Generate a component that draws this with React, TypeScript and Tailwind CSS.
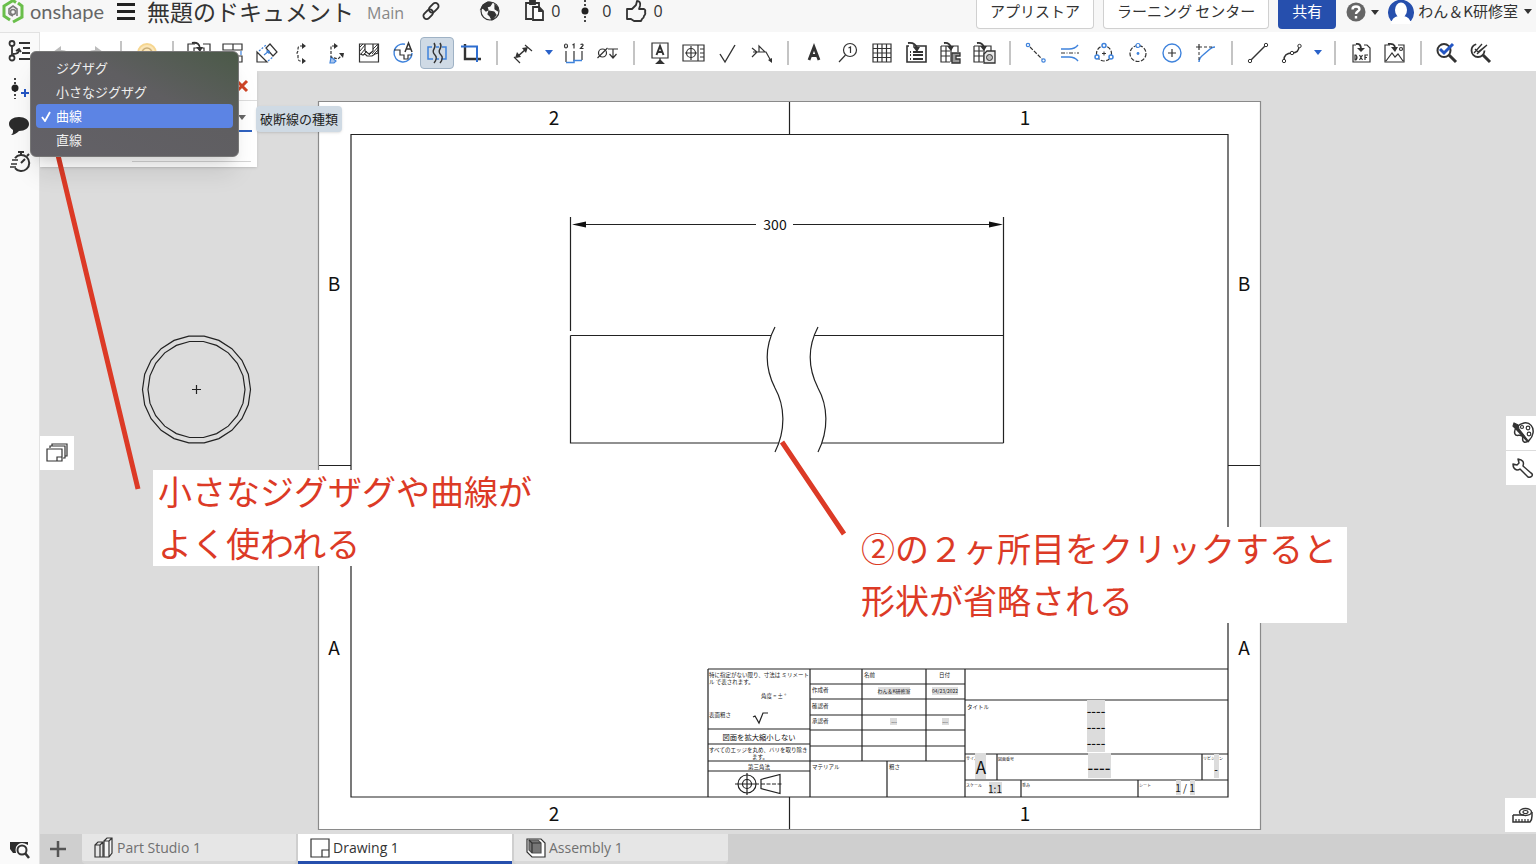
import type { ReactNode } from "react";

const Icon = ({ children, size = 24 }: { children: ReactNode; size?: number }) => (
  <svg
    width={size}
    height={size}
    viewBox="0 0 24 24"
    fill="none"
    stroke="#333"
    strokeWidth="1.2"
    aria-hidden="true"
    className="shrink-0"
  >
    {children}
  </svg>
);

const BLUE = "#3f83dc";

const Caret = ({ color = "#333" }: { color?: string }) => (
  <svg width="8" height="5" viewBox="0 0 8 5" aria-hidden="true">
    <path d="M0 0h8L4 5z" fill={color} />
  </svg>
);

type Tool = { label: string; icon: ReactNode; active?: boolean; caret?: boolean };

const toolGroups: Tool[][] = [
  [
    { label: "元に戻す", icon: <path d="M4 11l8-6v4c6 0 9 3 9 9-2-3-5-4-9-4v3z" fill="#bbb" stroke="none" /> },
    { label: "やり直し", icon: <path d="M20 11l-8-6v4c-6 0-9 3-9 9 2-3 5-4 9-4v3z" fill="#bbb" stroke="none" /> },
  ],
  [
    {
      label: "更新",
      icon: (
        <>
          <circle cx="12" cy="12" r="9" fill="#fbe6b8" stroke="#f6d690" strokeWidth="2" />
          <circle cx="12" cy="12" r="5" stroke="#c9ad77" strokeWidth="1.5" />
        </>
      ),
    },
  ],
  [
    {
      label: "ビューを挿入",
      icon: (
        <>
          <path d="M8 3H1v18h22V3h-7M7 12V7h10v8" />
          <path d="M5 2c5-1 8 1 8 6" strokeWidth="1.8" />
          <path d="M9 6h7l-3 5z" fill="#333" stroke="none" />
        </>
      ),
    },
    {
      label: "投影ビュー",
      icon: (
        <>
          <path d="M2 3h19v6H2zM12 3v6M2 14h7v7H2z" />
          <path d="M14 15h7v6h-7z" />
          <path d="M20 10v4" stroke={BLUE} />
        </>
      ),
    },
    {
      label: "補助ビュー",
      icon: (
        <>
          <path d="M2 11v10h10zM11 7l4-4 7 8-4 4z" />
          <path d="M4 10l7-6M13 20l5-4" stroke={BLUE} strokeDasharray="2 1.5" />
          <path d="M9 14l5-4M11 10h3v3" stroke={BLUE} />
        </>
      ),
    },
    {
      label: "断面ビュー",
      icon: (
        <>
          <path d="M14 5h-3q-2 0-2 3v2l-1 2 1 2v2q0 4 2 4h3" strokeDasharray="3 1.5" />
          <path d="M13 2l4 3-4 3zM13 17l4 3-4 3z" fill="#333" stroke="none" />
        </>
      ),
    },
    {
      label: "整列断面ビュー",
      icon: (
        <>
          <path d="M8 16l5 4-2 2H7z" fill="#a8c4ec" stroke={BLUE} />
          <path d="M12 5H8v11l7 2 4-4" strokeDasharray="3 1.5" />
          <path d="M11 2l4 3-4 3zM16 12h5l-1 5z" fill="#333" stroke="none" />
        </>
      ),
    },
    {
      label: "部分断面ビュー",
      icon: (
        <>
          <path d="M2.500 3h19v18h-19z" />
          <path d="M3 13l3 1 2-1 2 2h5l3-2 3-1V3M8 3v7l4 3 4-3V3" />
          <path d="M3 6l3-3M3 10l5-6M4 13l4-5M7 13l3-3M15 13l6-7M17 13l4-4M16 8l5-5M12 14l3-3" strokeWidth="1" />
        </>
      ),
    },
    {
      label: "詳細ビュー",
      icon: (
        <>
          <path d="M14 3.200A9 9 0 1 0 21 12" stroke={BLUE} strokeWidth="1.400" />
          <path d="M3 9h6v5h4v4h4v-4h4" />
          <path d="M14 11l3.500-9 3.500 9M15.500 8h4" strokeWidth="1.500" />
        </>
      ),
    },
    {
      label: "破断ビュー",
      active: true,
      icon: (
        <>
          <path d="M7 6H3v12h5M17 6h4v12h-5M11 18h3M11 6h3" stroke={BLUE} strokeWidth="1.500" />
          <path d="M9 2q2 3 0 6t1 6-1 8M15 2q2 3 0 6t1 6-1 8" strokeWidth="1.400" />
        </>
      ),
    },
    {
      label: "トリミング",
      icon: (
        <>
          <path d="M6 3v15h16" strokeWidth="2.400" />
          <path d="M2 5.500h16V21" stroke="#2f6ed0" strokeWidth="2" />
        </>
      ),
    },
  ],
  [
    {
      label: "寸法",
      caret: true,
      icon: (
        <>
          <path d="M6 16L15 8" strokeWidth="1.600" />
          <path d="M4 17l2-6 4 5zM17 6l-6 1 4 5z" fill="#333" stroke="none" />
          <path d="M3 16l6 6M14 4l7 6" />
        </>
      ),
    },
    {
      label: "座標寸法",
      icon: (
        <>
          <path d="M4 10v11M12 10v10M20 10v9" />
          <path d="M4 21.500h8v-2h8" stroke={BLUE} strokeWidth="1.500" />
          <ellipse cx="4" cy="5" rx="1.500" ry="2" />
          <path d="M10.500 4l1.500-1v4.500M18.500 3.500q3-1 2.500 1l-2.500 3H21.500" />
        </>
      ),
    },
    {
      label: "穴寸法",
      icon: (
        <>
          <circle cx="6.500" cy="12" r="4" />
          <path d="M1.500 17L11.500 7M12 8h10M17 8v9M13.500 13l3.500 4 3.500-4" />
        </>
      ),
    },
  ],
  [
    {
      label: "データム",
      icon: (
        <>
          <path d="M4 2h16v15H4z" />
          <path d="M8.500 14L12 5l3.500 9M9.500 11h5" strokeWidth="2" />
          <path d="M12 17v3" />
          <path d="M12 19l3.500 3.500h-7z" fill="#333" />
        </>
      ),
    },
    {
      label: "幾何公差",
      icon: (
        <>
          <path d="M1 4h21v16H1zM16 4v16M18 8h4M18 12h4M18 16h4" />
          <circle cx="9" cy="12" r="4.500" />
          <path d="M9 5v14M3 12h12" />
        </>
      ),
    },
    { label: "表面粗さ", icon: <path d="M4 13l5 8L19 4" strokeWidth="1.400" /> },
    {
      label: "溶接記号",
      icon: (
        <>
          <path d="M2 7l5 4-5 5M3 11h13l5 9M9 11V5l6 6" />
          <path d="M18 19l4-2v5z" fill="#333" stroke="none" />
        </>
      ),
    },
  ],
  [
    { label: "メモ", icon: <path d="M7 19l5-13 5 13M9 14.500h6" strokeWidth="2.800" /> },
    {
      label: "バルーン",
      icon: (
        <>
          <circle cx="14" cy="9" r="6.500" />
          <path d="M9.500 14L3 21M12.500 7l2-1v6" />
        </>
      ),
    },
    { label: "表", icon: <path d="M3 3h18v18H3zM3 7.500h18M3 12h18M3 16.500h18M7.500 3v18M12 3v18M16.500 3v18" /> },
    {
      label: "部品表",
      icon: (
        <>
          <path d="M9 5h13v16H3V5h2" strokeWidth="1.600" />
          <path d="M9 11h10M9 14h10M9 18h10M6 11h1M6 14h1M6 18h1" strokeWidth="2" />
          <path d="M4 2q7-1 9 5" strokeWidth="1.800" />
          <path d="M9 6h7l-3 5z" fill="#333" stroke="none" />
        </>
      ),
    },
    {
      label: "穴テーブル",
      icon: (
        <>
          <path d="M3 5h17v6M3 5v16h9M3 10h9M3 15h9M8 5v16M13 5v16" />
          <path d="M14 12h8v3h-4v3h4v4h-8z" fill="#999" strokeWidth="1.300" />
          <path d="M6 2q5-1 7 4" strokeWidth="1.800" />
          <path d="M9 5h7l-3 5z" fill="#333" stroke="none" />
        </>
      ),
    },
    {
      label: "改訂テーブル",
      icon: (
        <>
          <path d="M2 5h17v5M2 5v16h9M2 10h9M2 15h9M7 5v16M12 5v16" />
          <path d="M12 13l3-3h8v12H12z" fill="#e8e8e8" strokeWidth="1.300" />
          <circle cx="17.500" cy="16.500" r="3" fill="#bbb" strokeWidth="1" />
          <path d="M5 2q5-1 7 4" strokeWidth="1.800" />
          <path d="M8 5h7l-3 5z" fill="#333" stroke="none" />
        </>
      ),
    },
  ],
  [
    {
      label: "中心線",
      icon: (
        <>
          <path d="M6 6l12 12" strokeDasharray="4 1.500" />
          <circle cx="4" cy="4" r="1.700" stroke={BLUE} />
          <circle cx="19.500" cy="19.500" r="1.700" stroke={BLUE} />
        </>
      ),
    },
    {
      label: "2線間の中心線",
      icon: (
        <>
          <path d="M3 8h8q6 0 9-4M3 16h8q6 0 9 4" stroke={BLUE} strokeWidth="1.400" />
          <path d="M3 12h18" strokeDasharray="4 1.500 1 1.500" />
        </>
      ),
    },
    {
      label: "3点円中心線",
      icon: (
        <>
          <circle cx="12" cy="12.500" r="7.500" strokeDasharray="4 1.500" />
          <path d="M12 10.500v4M10 12.500h4" strokeWidth="1" />
          <g stroke={BLUE} strokeWidth="1.500" fill="#fff">
            <circle cx="12" cy="4.500" r="2" />
            <circle cx="5" cy="16" r="2" />
            <circle cx="19" cy="16" r="2" />
          </g>
        </>
      ),
    },
    {
      label: "2点円中心線",
      icon: (
        <>
          <circle cx="12" cy="12.500" r="8" strokeDasharray="4 1.500" />
          <circle cx="12" cy="4.500" r="2" stroke={BLUE} fill="#fff" />
          <circle cx="12" cy="12.500" r="1.400" fill={BLUE} stroke="none" />
        </>
      ),
    },
    {
      label: "中心マーク",
      icon: (
        <>
          <circle cx="12" cy="12" r="9" stroke={BLUE} strokeWidth="1.400" />
          <path d="M12 8v8M8 12h8" />
        </>
      ),
    },
    {
      label: "仮想交点",
      icon: (
        <>
          <path d="M5 21q0-4 4-7l7-6q2-2 5-2" stroke={BLUE} strokeWidth="1.500" />
          <path d="M5 3v6M2 6h6" />
          <path d="M5 11v9M10 6h10" strokeDasharray="3 2" strokeWidth="1" />
        </>
      ),
    },
  ],
  [
    {
      label: "線",
      icon: (
        <>
          <path d="M5 19L19 5" strokeWidth="1.500" />
          <circle cx="4" cy="20" r="1.700" fill="#fff" strokeWidth="1" />
          <circle cx="20" cy="4" r="1.700" fill="#fff" strokeWidth="1" />
        </>
      ),
    },
    {
      label: "スプライン",
      caret: true,
      icon: (
        <>
          <path d="M4 19q0-7 8-7 7 0 7-7" strokeWidth="1.500" />
          <circle cx="4" cy="20" r="1.700" fill="#fff" strokeWidth="1" />
          <circle cx="12" cy="12" r="1.700" fill="#fff" strokeWidth="1" />
          <circle cx="19.500" cy="5" r="1.700" fill="#fff" strokeWidth="1" />
        </>
      ),
    },
  ],
  [
    {
      label: "DXFを挿入",
      icon: (
        <>
          <path d="M7 4H4v17h17V7l-3-3h-3" />
          <path d="M7 3q5-1 5 5" strokeWidth="1.800" />
          <path d="M8 7h8l-4 4z" fill="#333" stroke="none" />
          <path d="M6 14v5h1q2-2.500 0-5zM10.500 14l3 5M13.500 14l-3 5M16 19v-5h3M16 16.500h2" />
        </>
      ),
    },
    {
      label: "画像を挿入",
      icon: (
        <>
          <path d="M7 4H2v17h19V4h-6M3 20l6-8 3 4 3-3 5 7" />
          <circle cx="18" cy="8" r="1.500" />
          <path d="M5 3q7-1 7 4" strokeWidth="1.800" />
          <path d="M8 6h7l-3 5z" fill="#333" stroke="none" />
        </>
      ),
    },
  ],
  [
    {
      label: "検査を表示",
      icon: (
        <>
          <circle cx="9" cy="9.500" r="6.500" strokeWidth="2" />
          <path d="M14 14l7 7" strokeWidth="3" />
          <path d="M5 8l4 4 9-9" stroke="#2456c4" strokeWidth="3" />
        </>
      ),
    },
    {
      label: "検査を非表示",
      icon: (
        <>
          <circle cx="9" cy="9.500" r="6.500" strokeWidth="1.800" strokeDasharray="28 13" />
          <path d="M14 14l7 7" strokeWidth="3" />
          <path d="M5 12l8-9M8 13l10-9M6 8l3 3 9-7" strokeWidth="1.300" />
        </>
      ),
    },
  ],
];

const Header = () => (
  <header className="flex h-8 shrink-0 items-start overflow-hidden bg-[#f7f7f7] text-[#333]">
    <div className="flex h-[22px] items-center">
      <svg width="26" height="26" viewBox="0 0 26 26" fill="none" aria-hidden="true" className="shrink-0">
        <path d="M10 22l-6-4V8l9-5.500 3 2" stroke="#6abf4b" strokeWidth="3" />
        <path d="M18 5l4 3v11l-9 5" stroke="#6abf4b" strokeWidth="3" />
        <path d="M9 16v-5l4-3 4 3v7M13 18l-4-2" stroke="#7b7b7b" strokeWidth="1.600" />
        <circle cx="13" cy="14" r="2.500" stroke="#7b7b7b" strokeWidth="1.500" />
      </svg>
      <span className="ml-1 w-[75px] font-['Lato','Liberation_Sans',sans-serif] text-[20px] leading-5 text-[#666]">
        onshape
      </span>
      <button aria-label="メニュー" className="ml-3 flex w-[18px] flex-col gap-1">
        <span className="h-[3px] bg-[#222]" />
        <span className="h-[3px] bg-[#222]" />
        <span className="h-[3px] bg-[#222]" />
      </button>
      <h1 className="ml-3 text-[23px] leading-[22px] whitespace-nowrap">無題のドキュメント</h1>
      <span className="ml-[13px] pt-1 font-['Open_Sans',sans-serif] text-base text-[#888]">Main</span>
      <button aria-label="リンク" className="ml-4">
        <Icon size={22}>
          <g strokeWidth="2">
            <rect x="9" y="5" width="12" height="7" rx="3.500" transform="rotate(-45 15 8.500)" />
            <rect x="3" y="12" width="12" height="7" rx="3.500" transform="rotate(-45 9 15.500)" />
          </g>
        </Icon>
      </button>
      <button aria-label="公開" className="ml-9">
        <Icon>
          <circle cx="12" cy="12" r="9" />
          <path d="M5 6l5-3 4 1-2 3-3 1 1 3-2 1-3-3-2 1zM11 12l5 1 2 3-4 5-2-4-2-2zM17 6l3 3v3l-3-2z" fill="#333" />
        </Icon>
      </button>
      <div className="ml-5 flex items-center font-['Open_Sans',sans-serif] text-base">
        <Icon>
          <path d="M10 20H4V4h13v4M8 5V2h5v3z" strokeWidth="1.800" />
          <path d="M11 8h6l4 4v9H11zM17 8v4h4" fill="#fff" strokeWidth="1.800" />
        </Icon>
        <span className="ml-[5px]">0</span>
        <span className="ml-[13px]">
          <Icon>
            <path d="M12 1v22" strokeDasharray="2 2" strokeWidth="1.800" />
            <circle cx="12" cy="12" r="3.500" fill="#222" stroke="none" />
          </Icon>
        </span>
        <span className="ml-[5px]">0</span>
        <span className="ml-[13px]">
          <Icon>
            <path
              d="M3 10h5l4-4 1-4q4 0 3 5l-1 3h5q2 1 1 3 1 2-1 4 0 2-2 3l-1 2h-7l-3-2H3z"
              strokeWidth="1.800"
              strokeLinejoin="round"
            />
          </Icon>
        </span>
        <span className="ml-[5px]">0</span>
      </div>
    </div>
    <div className="ml-auto flex items-start gap-[9px] pr-1 text-[15px] whitespace-nowrap">
      <button className="h-[29px] rounded-b border border-t-0 border-[#d0d0d0] bg-white px-[13px] pb-2">
        アプリストア
      </button>
      <button className="h-[29px] rounded-b border border-t-0 border-[#d0d0d0] bg-white px-[13px] pb-2">
        ラーニング センター
      </button>
      <button className="h-[29px] w-[58px] rounded-b bg-[#264fad] pb-2 text-white">共有</button>
      <button aria-label="ヘルプ" className="flex h-6 items-center gap-1">
        <svg width="22" height="22" viewBox="0 0 22 22" aria-hidden="true">
          <circle cx="11" cy="11" r="9.500" fill="#666" />
          <path d="M7.500 8.500q0-3 3.500-3t3.500 2.700c0 2-3.500 2.300-3.500 4.800M11 15v2.500" fill="none" stroke="#fff" strokeWidth="2.400" />
        </svg>
        <Caret />
      </button>
      <button className="flex h-[22px] items-center">
        <svg width="26" height="26" viewBox="0 0 26 26" aria-hidden="true">
          <path d="M3 23A13 13 0 1 1 23 23z" fill="#264fad" />
          <ellipse cx="13" cy="12" rx="6" ry="7.500" fill="#fff" />
          <path d="M3 26q1-7 7-8h6q6 1 7 8z" fill="#fff" />
        </svg>
        <span className="mr-[6px] ml-1">わん＆K研修室</span>
        <Caret />
      </button>
    </div>
  </header>
);

const Toolbar = () => (
  <div
    role="toolbar"
    aria-label="図面ツール"
    className="flex h-[39px] shrink-0 items-center overflow-hidden bg-white pt-[2px] pl-1"
  >
    {toolGroups.map((group, i) => (
      <div key={i} className="flex items-center">
        {i > 0 && <span className="mx-2 h-6 w-[2px] bg-[#c4c4c4]" />}
        {group.map((tool) => (
          <div key={tool.label} className="flex items-center">
            <button
              aria-label={tool.label}
              className={
                tool.active
                  ? "flex h-8 w-[34px] items-center justify-center rounded-sm border border-[#9fb2c5] bg-[#cfdae5]"
                  : "flex h-8 w-[34px] items-center justify-center"
              }
            >
              <Icon>{tool.icon}</Icon>
            </button>
            {tool.caret && (
              <button aria-label={tool.label + "のオプション"} className="flex w-[17px] justify-center">
                <Caret color="#2a62c9" />
              </button>
            )}
          </div>
        ))}
      </div>
    ))}
  </div>
);

const SideRail = () => (
  <nav aria-label="サイドバー" className="flex w-10 shrink-0 flex-col items-center border-t border-r border-[#e2e2e2] bg-[#fafafa]">
    <div className="flex flex-col gap-[13px] pt-[6px]">
      <button aria-label="フィーチャー">
        <Icon>
          <g strokeWidth="1.800">
            <circle cx="4" cy="4.500" r="2.500" />
            <circle cx="4" cy="19" r="2.500" />
            <path d="M4 7v9M5 15q6 0 6-4M8 12l3-2 2 3M11 4h11M15 9h7M14 14h8M11 20h11" />
          </g>
        </Icon>
      </button>
      <button aria-label="バージョンを作成">
        <Icon>
          <path d="M7 2v21" strokeDasharray="2 2" strokeWidth="1.800" />
          <circle cx="7" cy="12" r="3.500" fill="#222" stroke="none" />
          <path d="M17 13v8M13 17h8" stroke="#2456c4" strokeWidth="2" />
        </Icon>
      </button>
      <button aria-label="コメント">
        <Icon>
          <path d="M11 4c6 0 10 3 10 7s-4 7-10 7c-2 2-5 4-8 4 2-1 2-3 2-5-3-2-4-4-4-6 0-4 4-7 10-7z" fill="#2b2b2b" stroke="none" />
        </Icon>
      </button>
      <button aria-label="履歴">
        <Icon>
          <path d="M7 8a8 8 0 1 1 0 10M13 5V2M10 2h6M19 6l2-2M13 13l4-4" strokeWidth="2" />
          <path d="M4 10h6M3 14h6M2 17h6" strokeWidth="1.500" />
        </Icon>
      </button>
    </div>
    <button aria-label="タブを検索" className="mt-auto mb-[2px]">
      <Icon>
        <path d="M2 4h18v3q-8-5-12 2-1 3 0 6H5l-3-4z" fill="#2b2b2b" stroke="none" />
        <circle cx="14" cy="12" r="4.500" strokeWidth="2" />
        <path d="M17 15l4 5" strokeWidth="2.500" />
      </Icon>
    </button>
  </nav>
);

const titleLines =
  "M708 669H1228M708 669V797M708 729H810M708 744H810M708 761H810M708 771H810M810 669V797M810 684H965M810 699H965M810 715H965M810 730H965M810 746H965M810 761H965M862 669V761M926 669V761M887 761V797M965 669V797M965 700H1228M965 754H1228M965 780H1228M997 754V780M1202 754V780M1021 780V797M1138 780V797";

const smallTexts = [
  { x: 709, y: 677, t: "特に指定がない限り、寸法は ミリメート" },
  { x: 709, y: 684, t: "ル で表されます。" },
  { x: 761, y: 698, t: "角度 = ± °" },
  { x: 709, y: 717, t: "表面粗さ" },
  { x: 709, y: 752, t: "すべてのエッジを丸め、バリを取り除き" },
  { x: 752, y: 759, t: "ます。" },
  { x: 748, y: 769, t: "第三角法" },
  { x: 864, y: 677, t: "名前" },
  { x: 939, y: 677, t: "日付" },
  { x: 812, y: 692, t: "作成者" },
  { x: 812, y: 708, t: "確認者" },
  { x: 812, y: 723, t: "承認者" },
  { x: 812, y: 769, t: "マテリアル" },
  { x: 889, y: 769, t: "粗さ" },
  { x: 967, y: 709, t: "タイトル" },
];

const tinyTexts = [
  { x: 966, y: 760, t: "サイズ" },
  { x: 998, y: 761, t: "図面番号" },
  { x: 1203, y: 760, t: "リビジョン" },
  { x: 966, y: 787, t: "スケール" },
  { x: 1022, y: 787, t: "重み" },
  { x: 1139, y: 787, t: "シート" },
];

const zoneLabels = [
  { x: 554, y: 125, t: "2" },
  { x: 1025, y: 125, t: "1" },
  { x: 554, y: 821, t: "2" },
  { x: 1025, y: 821, t: "1" },
  { x: 334, y: 291, t: "B" },
  { x: 1244, y: 291, t: "B" },
  { x: 334, y: 655, t: "A" },
  { x: 1244, y: 655, t: "A" },
];

const polygon = (r: number) =>
  Array.from({ length: 22 }, (_, i) => {
    const a = ((i + 0.5) * Math.PI) / 11;
    return `${196.5 + r * Math.sin(a)},${389.5 + r * Math.cos(a)}`;
  }).join(" ");

const Drawing = () => (
  <svg
    viewBox="40 71 1496 763"
    preserveAspectRatio="xMinYMin meet"
    className="absolute inset-0 h-full w-full font-['Noto_Sans_CJK_JP',sans-serif]"
    fill="none"
    stroke="#222"
    strokeWidth="1.2"
  >
    {/* sheet */}
    <path d="M318.500 101.500H1260.500V829.500H318.500z" fill="#fff" stroke="#8a8a8a" />
    <path d="M351 134.500H1228V797H351zM789.500 102V134M789.500 797V829M319 465.500H351M1228 465.500H1260" />
    <g fill="#111" stroke="none" fontSize="19" textAnchor="middle">
      {zoneLabels.map((l, i) => (
        <text key={i} x={l.x} y={l.y}>{l.t}</text>
      ))}
    </g>

    {/* section view */}
    <polygon points={polygon(54)} />
    <polygon points={polygon(48.5)} />
    <path d="M192 389.500h9M196.500 385v9" />

    {/* broken view with dimension */}
    <path d="M570.500 217V331M1003.500 217V443M570.500 335.500H771M570.500 335.500V443H779M814 335.500H1003.500M822 443H1003.500M586 224.500H756M793 224.500H990" />
    <path d="M572 224.500l14-3v6zM1003 224.500l-14-3v6z" fill="#111" stroke="none" />
    <path d="M775 327C764 348 765 368 775 388C785 406 786 430 775 452" />
    <path d="M818 327C807 348 808 368 818 388C828 406 829 430 818 452" />
    <text x="775" y="230" fill="#111" stroke="none" fontSize="14" textAnchor="middle">300</text>

    {/* title block */}
    <path d={titleLines} />
    <g fill="#222" stroke="none" fontSize="4">
      {tinyTexts.map((s, i) => (
        <text key={i} x={s.x} y={s.y}>{s.t}</text>
      ))}
    </g>
    <g fill="#dcdcdc" stroke="none">
      <path d="M1087 700h18v52h-18zM1088 753h23v25h-23zM975 753h11v26h-11zM1214 754h5v24h-5zM989 782h13v12h-13zM1176 780h5v15h-5zM1190 780h5v15h-5z" />
      <path d="M890 718h7v7h-7zM942 718h7v7h-7zM878 687h32v8h-32zM932 687h26v8h-26z" />
    </g>
    <g fill="#222" stroke="none" fontSize="5.500">
      {smallTexts.map((s, i) => (
        <text key={i} x={s.x} y={s.y}>{s.t}</text>
      ))}
      <text x="894" y="693" textAnchor="middle" fontSize="5">わん＆K研修室</text>
      <text x="945" y="693" textAnchor="middle" fontSize="5">04/23/2022</text>
      <text x="894" y="724" textAnchor="middle">---</text>
      <text x="945" y="724" textAnchor="middle">---</text>
    </g>
    <g fill="#111" stroke="none" fontSize="10" textAnchor="middle">
      <text x="759" y="740" fontSize="7.300">図面を拡大縮小しない</text>
      <text x="981" y="774" fontSize="17">A</text>
      <text x="995" y="793">1:1</text>
      <text x="1185" y="792">1 / 1</text>
      <g fontWeight="500">
        <text x="1096" y="716" fontSize="13">----</text>
        <text x="1096" y="732" fontSize="13">----</text>
        <text x="1096" y="748" fontSize="13">----</text>
        <text x="1099" y="774" fontSize="16">----</text>
        <text x="1216" y="773" fontSize="10">-</text>
      </g>
    </g>
    <path d="M753 717l2-1 4 7 4-10h5" />
    <circle cx="747" cy="784" r="9" />
    <circle cx="747" cy="784" r="4.500" />
    <path d="M735 784h24M747 773v22M761 779.500L780 774.500V793.500L761 788.500z" />
    <path d="M761 784h22" strokeDasharray="4 1.500" strokeWidth="1" />
  </svg>
);

const Leaders = () => (
  <svg
    viewBox="40 71 1496 763"
    preserveAspectRatio="xMinYMin meet"
    aria-hidden="true"
    className="pointer-events-none absolute inset-0 h-full w-full"
  >
    <path d="M57 151L138 489M782 442L844 534" stroke="#dc3a26" strokeWidth="5" />
  </svg>
);

const breakLineTypes = ["ジグザグ", "小さなジグザグ", "曲線", "直線"];

const BreakViewDialog = () => (
  <section aria-label="破断ビュー" className="absolute top-0 left-0 h-24 w-[217px] bg-white shadow-sm">
    <div className="flex h-[30px] items-center justify-end border-b border-[#ddd] pr-2">
      <button aria-label="閉じる">
        <svg width="14" height="14" viewBox="0 0 14 14" aria-hidden="true">
          <path d="M2 2l10 10M12 2L2 12" stroke="#cf4526" strokeWidth="3" />
        </svg>
      </button>
    </div>
    <div className="mr-[5px] ml-2 flex h-[31px] items-center justify-end border-b-2 border-[#2f62c0] pt-1 pr-[6px]">
      <Caret color="#666" />
    </div>
    <div className="mt-[29px] mr-[6px] ml-[92px] border-b border-[#d5d5d5]" />
  </section>
);

const BreakLineMenu = () => (
  <ul
    role="listbox"
    aria-label="破断線の種類"
    className="absolute top-[51px] left-[30px] w-[209px] rounded-md border border-[#777] bg-linear-to-bl from-[#4b5a48] via-[#5f5e61] via-40% to-[#636167] px-[5px] py-1 text-[13px] text-[#eee] shadow-xl"
  >
    {breakLineTypes.map((type) => (
      <li key={type} role="option" aria-selected={type === "曲線"}>
        <button
          className={
            type === "曲線"
              ? "flex h-6 w-full items-center rounded bg-[#5c84e4] text-white"
              : "flex h-6 w-full items-center"
          }
        >
          <span className="flex w-5 justify-center">
            {type === "曲線" && (
              <svg width="12" height="12" viewBox="0 0 12 12" fill="none" aria-hidden="true">
                <path d="M2 7l3 4 5-9" stroke="#fff" strokeWidth="1.800" />
              </svg>
            )}
          </span>
          {type}
        </button>
      </li>
    ))}
  </ul>
);

const Canvas = () => (
  <main className="relative min-h-0 flex-1 overflow-hidden bg-[#dcdcdc]">
    <Drawing />
    <BreakViewDialog />
    <div role="tooltip" className="absolute top-[35px] left-[216px] rounded-sm bg-[#cfdae4] px-1 text-[13px] leading-[26px] text-[#222] shadow-sm">
      破断線の種類
    </div>
    <button aria-label="シート" className="absolute top-[365px] left-0 flex size-[34px] items-center justify-center bg-white">
      <Icon>
        <path d="M5 7V5h15v12h-2M7 5V3h15v12h-2" />
        <path d="M2 8h15v12H2zM12 20v-4h5" />
      </Icon>
    </button>
    <div className="absolute top-[345px] right-0 flex w-[30px] flex-col gap-px">
      <button aria-label="スタイル" className="flex h-[34px] items-center justify-end bg-white pr-px">
        <Icon>
          <path d="M13 2c6-1 10 4 9 10s-6 10-9 9c-3-2 0-4-2-6s-6 1-7-2c-2-5 4-10 9-11z" strokeWidth="1.500" />
          <circle cx="11" cy="6" r="1.500" />
          <circle cx="17" cy="7" r="1.800" />
          <circle cx="18" cy="13" r="1.800" />
          <path d="M3 2l4 2 1 4 10 13-3-2L5 8 2 5z" fill="#333" />
        </Icon>
      </button>
      <button aria-label="プロパティ" className="flex h-[34px] items-center justify-end bg-white pr-px">
        <Icon>
          <path
            d="M7 3l1 4-2 2-4-1q0 5 4 6 2 0 3-1l8 8q2 1 4-1 1-2-1-3l-8-7q2-6-5-7z"
            strokeWidth="1.500"
            strokeLinejoin="round"
          />
        </Icon>
      </button>
    </div>
    <button aria-label="計測" className="absolute right-0 bottom-[2px] flex h-[34px] w-[31px] items-center justify-end bg-white pr-[2px]">
      <Icon>
        <path d="M3 12v7h17q2-2 2-6V9M3 12h11" strokeWidth="1.500" />
        <ellipse cx="15.500" cy="9" rx="6" ry="3.500" strokeWidth="1.500" />
        <ellipse cx="15.500" cy="9" rx="2.500" ry="1.500" />
        <path d="M6 19v-3M9 19v-3M12 19v-3M15 19v-3M18 19v-3" />
      </Icon>
    </button>
    <p className="absolute top-[399px] left-[113px] flex h-24 w-[381px] flex-col gap-2 bg-white pl-[5px] text-[34px] leading-[42px] whitespace-nowrap text-[#dc3a26]">
      <span className="h-11">小さなジグザグや曲線が</span>
      <span className="h-11">よく使われる</span>
    </p>
    <p className="absolute top-[456px] left-[820px] flex h-24 w-[487px] flex-col gap-2 bg-white pl-px text-[34px] leading-[42px] whitespace-nowrap text-[#dc3a26]">
      <span className="h-11">②の２ヶ所目をクリックすると</span>
      <span className="h-11">形状が省略される</span>
    </p>
    <Leaders />
  </main>
);

const tabs = [
  {
    name: "Part Studio 1",
    icon: (
      <>
        <path d="M3 9l3-3h5v15H3zM3 9h5v12M8 9l3-3" />
        <path d="M12 5l3-3h5v15l-3 4h-5zM12 5h5v16M17 5l3-3" fill="#f4f4f4" />
      </>
    ),
  },
  { name: "Drawing 1", icon: <path d="M3 3h18v18H3zM14 21v-7h7" /> },
  {
    name: "Assembly 1",
    icon: (
      <>
        <path d="M3 3h14l4 4v14H8l-5-5z" fill="#fff" />
        <path d="M5 4h9l3 3v10H8l-3-3z" fill="#777" stroke="#555" />
        <path d="M8 7h9M8 7v10M5 4l3 3" />
      </>
    ),
  },
];

const TabBar = () => (
  <footer className="flex h-[30px] shrink-0 gap-[2px] bg-[#cfcfcf] font-['Open_Sans',sans-serif] text-[14px]">
    <button aria-label="タブを追加" className="flex w-10 items-center justify-center pr-1">
      <svg width="16" height="16" viewBox="0 0 16 16" aria-hidden="true">
        <path d="M8 0v16M0 8h16" stroke="#555" strokeWidth="2.500" />
      </svg>
    </button>
    {tabs.map((tab) => (
      <button
        key={tab.name}
        className={
          tab.name === "Drawing 1"
            ? "flex w-[214px] items-center border-b-[3px] border-[#264fad] bg-white pl-[10px] text-[#333]"
            : "flex w-[214px] items-center rounded-b border-b-[3px] border-[#d8d8d8] bg-[#e6e6e6] pl-[10px] text-[#707070]"
        }
      >
        <Icon>{tab.icon}</Icon>
        <span className="ml-px">{tab.name}</span>
      </button>
    ))}
  </footer>
);

export default function App() {
  return (
    <div className="relative flex h-screen flex-col overflow-hidden font-['Noto_Sans_CJK_JP',sans-serif]">
      <Header />
      <div className="flex min-h-0 flex-1">
        <SideRail />
        <div className="flex min-w-0 flex-1 flex-col">
          <Toolbar />
          <Canvas />
          <TabBar />
        </div>
      </div>
      <BreakLineMenu />
    </div>
  );
}
